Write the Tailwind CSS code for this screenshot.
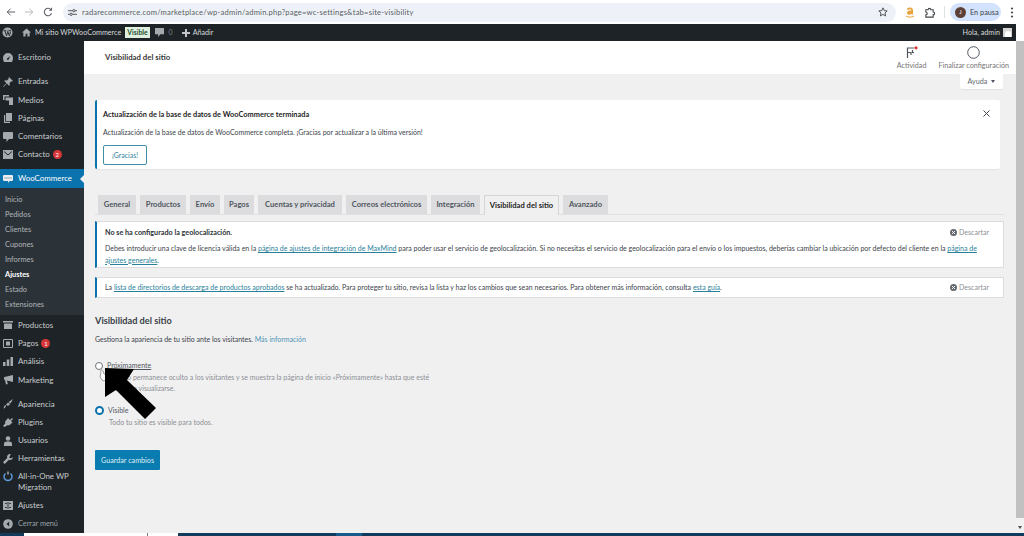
<!DOCTYPE html>
<html lang="es">
<head>
<meta charset="UTF-8">
<title>Visibilidad del sitio</title>
<script src="https://cdn.jsdelivr.net/npm/@tailwindcss/browser@4"></script>
</head>
<body class="font-['Lato',sans-serif] text-[7px] leading-[11px] text-[#3c434a] bg-white">
<div class="relative flex flex-col w-[1024px] h-[536px] overflow-hidden">

  <!-- browser bar -->
  <div class="flex items-center h-[24px] bg-white shrink-0">
    <svg class="ml-[6px] w-[10px] h-[10px]" viewBox="0 0 12 12" fill="none" stroke="#5f6368" stroke-width="1.2"><path d="M11 6H1.500M5.500 2 1.500 6l4 4"/></svg>
    <svg class="ml-[8px] w-[10px] h-[10px]" viewBox="0 0 12 12" fill="none" stroke="#b5b8bb" stroke-width="1.2"><path d="M1 6h9.500M6.500 2l4 4-4 4"/></svg>
    <svg class="ml-[9px] w-[10px] h-[10px]" viewBox="0 0 12 12" fill="none" stroke="#5f6368" stroke-width="1.3"><path d="M10.300 7.500A4.500 4.500 0 1 1 9.600 3.200M10.200 1v2.800H7.400"/></svg>
    <div class="ml-[10px] flex items-center w-[833px] h-[19px] rounded-full bg-[#eef2f8] pl-[5px]">
      <svg class="w-[9px] h-[9px]" viewBox="0 0 10 10" fill="none" stroke="#44474a" stroke-width="1"><path d="M0 3h5M8 3h2M0 7h2M5 7h5"/><circle cx="6.500" cy="3" r="1.300"/><circle cx="3.500" cy="7" r="1.300"/></svg>
      <span class="ml-[5px] text-[7.600px] text-[#5a5e63] tracking-[0.2px]">radarecommerce.com/marketplace/wp-admin/admin.php?page=wc-settings&amp;tab=site-visibility</span>
      <svg class="ml-auto mr-[8px] w-[10px] h-[10px]" viewBox="0 0 12 12" fill="none" stroke="#44474a" stroke-width="1.100"><path d="m6 1 1.500 3.300 3.500.4-2.600 2.400.7 3.600L6 8.900l-3.100 1.800.7-3.600L1 4.700l3.500-.4z"/></svg>
    </div>
    <svg class="ml-[9px] w-[10px] h-[11px]" viewBox="0 0 10 11"><path d="M2 2.500C2 1 3.500.5 5 .5S8 1.300 8 3v4.500H6.700L6.500 7C5 8 2 8 2 6s2-2.500 4.300-2.500V3C6.300 2 4 1.800 3.700 3z" fill="#e8a33a"/><path d="M1 9c2.500 1.500 5.500 1.500 8 0" stroke="#e8a33a" stroke-width="1" fill="none"/></svg>
    <svg class="ml-[9px] w-[11px] h-[11px]" viewBox="0 0 12 12" fill="none" stroke="#44474a" stroke-width="1.200"><path d="M2 3h2.500a1.500 1.500 0 0 1 3 0H10v2.500a1.500 1.500 0 0 1 0 3V11H2V8.500a1.500 1.500 0 0 0 0-3z"/></svg>
    <div class="ml-[9px] w-px h-[12px] bg-[#dfe1e5]"></div>
    <div class="ml-[5px] flex items-center w-[51px] h-[18px] rounded-full bg-[#d3e3fd] whitespace-nowrap">
      <div class="ml-[5px] flex items-center justify-center w-[11px] h-[11px] rounded-full bg-[#5d4037] text-white text-[5.500px]">J</div>
      <span class="ml-[4px] text-[7.300px] text-[#3c4043]">En pausa</span>
    </div>
    <svg class="ml-[9px] w-[4px] h-[11px]" viewBox="0 0 4 11" fill="#44474a"><circle cx="2" cy="1.500" r="1.100"/><circle cx="2" cy="5.500" r="1.100"/><circle cx="2" cy="9.500" r="1.100"/></svg>
  </div>

  <!-- admin bar -->
  <div class="flex items-center h-[17px] bg-[#1d2327] text-[#d5d8da] shrink-0 w-[1016px]">
    <svg class="ml-[2px] w-[11px] h-[11px]" viewBox="0 0 12 12"><circle cx="6" cy="6" r="5.500" fill="#a7aaad"/><path d="M2 4h2.500M7 4h2.800M3 4l2 5.500L6.300 5.500M6 4l2 5.500L9.500 5" stroke="#1d2327" stroke-width="1" fill="none"/></svg>
    <svg class="ml-[9px] w-[9px] h-[9px]" viewBox="0 0 10 10" fill="#a7aaad"><path d="M5 .5 0 5h1.500v4.500h2.500V6.500h2v3h2.500V5H10z"/></svg>
    <span class="ml-[4px] text-[7.200px]">Mi sitio WPWooCommerce</span>
    <span class="ml-[4px] px-[2px] h-[11px] leading-[11px] bg-[#dff0e0] text-[#1d4d2a] font-bold text-[6.800px]">Visible</span>
    <svg class="ml-[5px] w-[9px] h-[9px]" viewBox="0 0 10 10" fill="#a7aaad"><path d="M0 0h10v7H6L3.500 10V7H0z"/></svg>
    <span class="ml-[5px] text-[#7e8388]">0</span>
    <svg class="ml-[9px] w-[8px] h-[8px]" viewBox="0 0 8 8" fill="#c3c4c7"><path d="M3 0h2v3h3v2H5v3H3V5H0V3h3z"/></svg>
    <span class="ml-[3px] text-[7.200px]">Añadir</span>
    <span class="ml-auto text-[7.200px]">Hola, admin</span>
    <div class="ml-[3px] mr-[4px] w-[9px] h-[9px] bg-[#d5d5d5] flex items-end justify-center"><div class="w-[6px] h-[6px] rounded-t-full bg-white"></div></div>
  </div>

  <div class="flex flex-1 min-h-0">
    <!-- sidebar -->
    <nav class="flex flex-col w-[84px] bg-[#1d2327] text-[#c9ccce] text-[7.900px] shrink-0 h-[492px]">
      <a class="flex items-center h-[18px] mt-[8px] pl-[3px] gap-[5px]"><svg class="w-[10px] h-[9px]" viewBox="0 0 10 9" fill="#a7aaad"><path d="M5 0a5 5 0 0 0-5 5c0 1.500.4 2.800 1 4h8c.6-1.200 1-2.500 1-4a5 5 0 0 0-5-5zM5 7a1 1 0 0 1-.7-1.700L7.500 3 5.700 6.300A1 1 0 0 1 5 7z"/></svg>Escritorio</a>
      <div class="h-[6px]"></div>
      <a class="flex items-center h-[18.300px] pl-[3px] gap-[5px]"><svg class="w-[10px] h-[10px]" viewBox="0 0 10 10" fill="#a7aaad"><path d="m6 0 4 4-1 .5-.6-.3L6.500 6 6.800 8 6 8.700 3.800 6.500 1 9.500 0 10l.5-1 3-2.800L1.300 4 2 3.200l2 .3L5.800 1.600 5.500 1z"/></svg>Entradas</a>
      <a class="flex items-center h-[18.300px] pl-[3px] gap-[5px]"><svg class="w-[10px] h-[10px]" viewBox="0 0 10 10" fill="#a7aaad"><path d="M0 0h6v1.500H1.500V5H0zM2.500 2.500H10V10H6V5.500H2.500z"/></svg>Medios</a>
      <a class="flex items-center h-[18.300px] pl-[3px] gap-[5px]"><svg class="w-[10px] h-[10px]" viewBox="0 0 10 10" fill="#a7aaad"><path d="M3 0h6v8H3zM1 2h1.200v6.800H7V10H1z"/></svg>Páginas</a>
      <a class="flex items-center h-[18.300px] pl-[3px] gap-[5px]"><svg class="w-[10px] h-[10px]" viewBox="0 0 10 10" fill="#a7aaad"><path d="M1 0h8a1 1 0 0 1 1 1v5a1 1 0 0 1-1 1H6l-2.500 3V7H1a1 1 0 0 1-1-1V1a1 1 0 0 1 1-1z"/></svg>Comentarios</a>
      <a class="flex items-center h-[18.300px] pl-[3px] gap-[5px]"><svg class="w-[10px] h-[9px]" viewBox="0 0 10 9"><path d="M0 0h10v9H0z" fill="#a7aaad"/><path d="m1 1.500 4 3.500 4-3.500" stroke="#1d2327" stroke-width="1" fill="none"/></svg>Contacto<span class="flex items-center justify-center w-[9px] h-[9px] rounded-full bg-[#d63638] text-white text-[6px] -ml-[2px]">2</span></a>
      <div class="h-[5.500px]"></div>
      <a class="relative flex items-center h-[19px] pl-[3px] gap-[5px] bg-[#0a72ac] text-white"><svg class="w-[10px] h-[8px]" viewBox="0 0 10 8"><path d="M1 0h8a1 1 0 0 1 1 1v4a1 1 0 0 1-1 1H6.500L5.500 8 5 6H1a1 1 0 0 1-1-1V1a1 1 0 0 1 1-1z" fill="#e8eef2"/><path d="M2 2v2M4 2v2M6 2v2M8 2v2" stroke="#7a8c99" stroke-width=".7"/></svg>WooCommerce<span class="absolute right-0 top-[5.500px] border-y-[4px] border-r-[4px] border-y-transparent border-r-[#f0f0f1]"></span></a>
      <div class="flex flex-col bg-[#2c3338] h-[128px] pt-[3.500px] pl-[5px] text-[#b0b4b8] text-[7.400px]">
        <a class="flex items-center h-[15px]">Inicio</a>
        <a class="flex items-center h-[15px]">Pedidos</a>
        <a class="flex items-center h-[15px]">Clientes</a>
        <a class="flex items-center h-[15px]">Cupones</a>
        <a class="flex items-center h-[15px]">Informes</a>
        <a class="flex items-center h-[15px] font-bold text-white">Ajustes</a>
        <a class="flex items-center h-[15px]">Estado</a>
        <a class="flex items-center h-[15px]">Extensiones</a>
      </div>
      <a class="flex items-center h-[18.300px] pl-[3px] gap-[5px] mt-[1px]"><svg class="w-[10px] h-[8px]" viewBox="0 0 10 8" fill="#a7aaad"><path d="M0 0h10v1.500H0zM1 2.500h8V8H1z"/></svg>Productos</a>
      <a class="flex items-center h-[18.300px] pl-[3px] gap-[5px]"><svg class="w-[10px] h-[9px]" viewBox="0 0 10 9"><path d="M.5.500h9v8h-9z" fill="none" stroke="#a7aaad"/><path d="M3 2.500h4v4H3z" fill="#a7aaad"/></svg>Pagos<span class="flex items-center justify-center w-[9px] h-[9px] rounded-full bg-[#d63638] text-white text-[6px] -ml-[2px]">1</span></a>
      <a class="flex items-center h-[18.300px] pl-[3px] gap-[5px]"><svg class="w-[10px] h-[9px]" viewBox="0 0 10 9" fill="#a7aaad"><path d="M0 5h2.500v4H0zM3.700 2.500h2.600V9H3.700zM7.500 0H10v9H7.500z"/></svg>Análisis</a>
      <a class="flex items-center h-[18.300px] pl-[3px] gap-[5px]"><svg class="w-[10px] h-[10px]" viewBox="0 0 10 10" fill="#a7aaad"><path d="M10 0v7L4 5.500l.8 3.500-1.800.5-1-4.300A2 2 0 0 1 1.500 2z"/></svg>Marketing</a>
      <div class="h-[6px]"></div>
      <a class="flex items-center h-[18.300px] pl-[3px] gap-[5px]"><svg class="w-[10px] h-[10px]" viewBox="0 0 10 10" fill="#a7aaad"><path d="M10 0 7.500 4.500 5.500 3zM5 3.500l2 1.500c-.5 1.500-2 2-2.800 1.500L3 5.800zM3 6.500C3 8.500 1.500 9.500 0 9.500c1-.7 1-1.500 1.200-2.300.2-.9 1-1.200 1.800-.7z"/></svg>Apariencia</a>
      <a class="flex items-center h-[18.300px] pl-[3px] gap-[5px]"><svg class="w-[10px] h-[10px]" viewBox="0 0 10 10" fill="#a7aaad"><path d="m5 1 2 2 2-2 1 1-2 2 1.500 1.500-3.500 3L5 8 1.500 10 0 9l2.500-3L1.800 5z"/></svg>Plugins</a>
      <a class="flex items-center h-[18.300px] pl-[3px] gap-[5px]"><svg class="w-[10px] h-[10px]" viewBox="0 0 10 10" fill="#a7aaad"><circle cx="5" cy="2.500" r="2.300"/><path d="M1 10V7.500C1 6 2.500 5.500 5 5.500s4 .5 4 2V10z"/></svg>Usuarios</a>
      <a class="flex items-center h-[18.300px] pl-[3px] gap-[5px]"><svg class="w-[10px] h-[10px]" viewBox="0 0 10 10" fill="#a7aaad"><path d="M7 0a3 3 0 0 0-2.800 4L0 8.300 1.700 10 6 5.800A3 3 0 0 0 10 3L8 4.500 6.200 3.500 7.800.2z"/></svg>Herramientas</a>
      <a class="flex h-[29px] pl-[3px] gap-[5px] pt-[3px]"><svg class="w-[10px] h-[11px]" viewBox="0 0 10 11" fill="none" stroke="#5b9bd5" stroke-width="1.500"><path d="M7.500 2.500a4 4 0 1 1-5 0"/><path d="M5 .5v3" stroke="#a7aaad"/></svg><span>All-in-One WP<br>Migration</span></a>
      <a class="flex items-center h-[18.300px] pl-[3px] gap-[5px]"><svg class="w-[10px] h-[9px]" viewBox="0 0 10 9"><path d="M0 0h10v9H0z" fill="#a7aaad"/><path d="M2 2.500h2M6 2.500h2M2 6.500h2M6 6.500h2M5 1v7" stroke="#1d2327" stroke-width=".8"/></svg>Ajustes</a>
      <a class="flex items-center h-[18.300px] pl-[3px] gap-[5px] text-[#9ea3a8] text-[7.300px]"><svg class="w-[10px] h-[10px]" viewBox="0 0 10 10"><circle cx="5" cy="5" r="4.800" fill="#a7aaad"/><path d="M6.200 2.500 3.500 5l2.700 2.500z" fill="#1d2327"/></svg>Cerrar menú</a>
    </nav>

    <!-- main -->
    <main class="flex flex-col flex-1 min-w-0 bg-[#f0f0f1]">
      <header class="flex items-start justify-between h-[33px] bg-white shrink-0">
        <h1 class="ml-[21px] mt-[11px] font-bold text-[7.800px] text-[#3a3a3a]">Visibilidad del sitio</h1>
        <div class="flex mr-[7px] text-[#757575] text-[7.200px]">
          <div class="flex flex-col items-center mt-[5px]">
            <svg class="w-[12px] h-[13px]" viewBox="0 0 12 13" fill="none" stroke="#50575e" stroke-width="1.200"><path d="M1.500 12V2h6.500M1.500 6.500h3.500V9M8 6.500h-1.500V4"/><circle cx="10" cy="1.800" r="1.600" fill="#d63638" stroke="none"/></svg>
            <span class="mt-[1px]">Actividad</span>
          </div>
          <div class="flex flex-col items-center mt-[5px] ml-[12px]">
            <svg class="w-[13px] h-[13px]" viewBox="0 0 13 13" fill="none" stroke="#50575e" stroke-width="1"><circle cx="6.500" cy="6.500" r="5.800"/></svg>
            <span class="mt-[1px]">Finalizar configuración</span>
          </div>
        </div>
      </header>
      <div class="flex justify-end pr-[13px] h-[15px] shrink-0">
        <div class="flex items-center justify-center w-[43px] bg-white text-[#646970] text-[7.200px] rounded-b-[2px] shadow-[0_1px_1px_rgba(0,0,0,0.06)]">Ayuda<span class="ml-[4px] border-x-[2.500px] border-t-[3px] border-x-transparent border-t-[#50575e]"></span></div>
      </div>
      <div class="flex flex-col pl-[11px] pr-[12px]">
        <section class="relative mt-[11px] mr-[4px] h-[69px] bg-white border-l-[2px] border-[#0a72ac] rounded-[2px] pl-[6px] pt-[9px] shadow-[0_1px_1px_rgba(0,0,0,0.05)]">
          <p class="font-bold text-[#1e1e1e] text-[7.400px]">Actualización de la base de datos de WooCommerce terminada</p>
          <p class="mt-[7px]">Actualización de la base de datos de WooCommerce completa. ¡Gracias por actualizar a la última versión!</p>
          <span class="mt-[7px] flex items-center justify-center w-[44px] h-[20px] border border-[#3f8fa5] rounded-[2px] text-[#2f8299]">¡Gracias!</span>
          <svg class="absolute right-[10px] top-[10px] w-[7px] h-[7px]" viewBox="0 0 7 7" stroke="#3c434a" stroke-width="1"><path d="m.5.500 6 6M6.500.500l-6 6"/></svg>
        </section>

        <div class="flex mt-[26px] h-[20px] pl-[3px] gap-[4px] border-b border-[#e0e0e0] text-[#50575e] font-bold text-[7.600px]">
          <span class="flex items-center justify-center w-[38px] h-[19px] bg-[#dcdcde]">General</span>
          <span class="flex items-center justify-center w-[46px] h-[19px] bg-[#dcdcde]">Productos</span>
          <span class="flex items-center justify-center w-[30px] h-[19px] bg-[#dcdcde]">Envío</span>
          <span class="flex items-center justify-center w-[30px] h-[19px] bg-[#dcdcde]">Pagos</span>
          <span class="flex items-center justify-center w-[84px] h-[19px] bg-[#dcdcde]">Cuentas y privacidad</span>
          <span class="flex items-center justify-center w-[81px] h-[19px] bg-[#dcdcde]">Correos electrónicos</span>
          <span class="flex items-center justify-center w-[49px] h-[19px] bg-[#dcdcde]">Integración</span>
          <span class="flex items-center justify-center w-[75px] h-[20px] bg-[#f0f0f1] border border-b-0 border-[#d5d5d6] text-[#1e1e1e]">Visibilidad del sitio</span>
          <span class="flex items-center justify-center w-[45px] h-[19px] bg-[#dcdcde]">Avanzado</span>
        </div>

        <section class="relative mt-[6px] h-[47px] bg-white border border-l-[2px] border-[#dcdcde] border-l-[#0a72ac] pl-[8px] pt-[5px]">
          <p class="font-bold text-[#2c3338] text-[7.200px]">No se ha configurado la geolocalización.</p>
          <p class="mt-[5px] leading-[11.500px] w-[885px]">Debes introducir una clave de licencia válida en la <a class="text-[#2a7f9a] underline">página de ajustes de integración de MaxMind</a> para poder usar el servicio de geolocalización. Si no necesitas el servicio de geolocalización para el envío o los impuestos, deberías cambiar la ubicación por defecto del cliente en la <a class="text-[#2a7f9a] underline">página de ajustes generales</a>.</p>
          <span class="absolute right-[14px] top-[5px] flex items-center gap-[2px] text-[#8c8f94]"><svg class="w-[7px] h-[7px]" viewBox="0 0 8 8"><circle cx="4" cy="4" r="4" fill="#646970"/><path d="m2.300 2.300 3.400 3.400M5.700 2.300 2.300 5.700" stroke="#fff" stroke-width="1.100"/></svg>Descartar</span>
        </section>

        <section class="relative mt-[9px] h-[21px] bg-white border border-l-[2px] border-[#dcdcde] border-l-[#0a72ac] pl-[8px] flex items-center">
          <p>La <a class="text-[#2a7f9a] underline">lista de directorios de descarga de productos aprobados</a> se ha actualizado. Para proteger tu sitio, revisa la lista y haz los cambios que sean necesarios. Para obtener más información, consulta <a class="text-[#2a7f9a] underline">esta guía</a>.</p>
          <span class="absolute right-[14px] top-[4px] flex items-center gap-[2px] text-[#8c8f94]"><svg class="w-[7px] h-[7px]" viewBox="0 0 8 8"><circle cx="4" cy="4" r="4" fill="#646970"/><path d="m2.300 2.300 3.400 3.400M5.700 2.300 2.300 5.700" stroke="#fff" stroke-width="1.100"/></svg>Descartar</span>
        </section>

        <h2 class="mt-[16px] font-bold text-[9.200px] leading-[13px] text-[#3a4046]">Visibilidad del sitio</h2>
        <p class="mt-[7px]">Gestiona la apariencia de tu sitio ante los visitantes. <a class="text-[#4f94b5]">Más información</a></p>

        <div class="flex items-center mt-[15px] h-[11px] gap-[4px]">
          <span class="w-[8px] h-[8px] rounded-full border border-[#6f7479] bg-white"></span>
          <span class="text-[#50575e] underline">Próximamente</span>
        </div>
        <p class="ml-[14px] mt-[1px] w-[326px] text-[#8c8f94]">Tu sitio permanece oculto a los visitantes y se muestra la página de inicio «Próximamente» hasta que esté listo para visualizarse.</p>
        <div class="flex items-center mt-[11px] h-[11px] gap-[4px]">
          <span class="w-[9px] h-[9px] rounded-full border-[2.500px] border-[#0a72ac] bg-white"></span>
          <span class="text-[#50575e]">Visible</span>
        </div>
        <p class="ml-[14px] mt-[1px] text-[#8c8f94]">Todo tu sitio es visible para todos.</p>

        <button class="mt-[22px] w-[65px] h-[20px] bg-[#0a7cb0] text-[#dceff7] text-[7.200px] rounded-[1px]">Guardar cambios</button>
      </div>
    </main>
    <!-- scrollbar -->
    <div class="flex flex-col items-center w-[8px] bg-[#f1f1f1] shrink-0">
      <div class="w-[8px] h-[477px] bg-[#c1c1c1]"></div>
      <span class="mt-[8px] border-x-[2px] border-t-[3px] border-x-transparent border-t-[#505050]"></span>
    </div>
  </div>

  <!-- cursor and annotation arrow over the radio -->
  <svg class="absolute left-[98px] top-[366px] w-[60px] h-[56px]" viewBox="98 366 60 56">
    <path d="M101 372c-1-2 1-3 2-1l1 3 3 .5 1 5-5 1.500-3-4z" fill="#fff" stroke="#777" stroke-width=".7"/>
    <polygon points="105,368 134,369 127,380 156,408 145,419 116,390 105,397" fill="#000"/>
  </svg>
  <!-- taskbar sliver -->
  <div class="absolute left-0 bottom-0 flex w-full h-[3px]">
    <div class="w-[24px] bg-[#123a5a]"></div>
    <div class="w-[123px] bg-white"></div>
    <div class="w-px bg-[#777]"></div>
    <div class="w-[30px] bg-white"></div>
    <div class="w-[158px] bg-[#123a5a]"></div>
    <div class="w-[26px] bg-[#1a5a8a]"></div>
    <div class="flex-1 bg-[#123a5a]"></div>
  </div>
</div>
</body>
</html>
